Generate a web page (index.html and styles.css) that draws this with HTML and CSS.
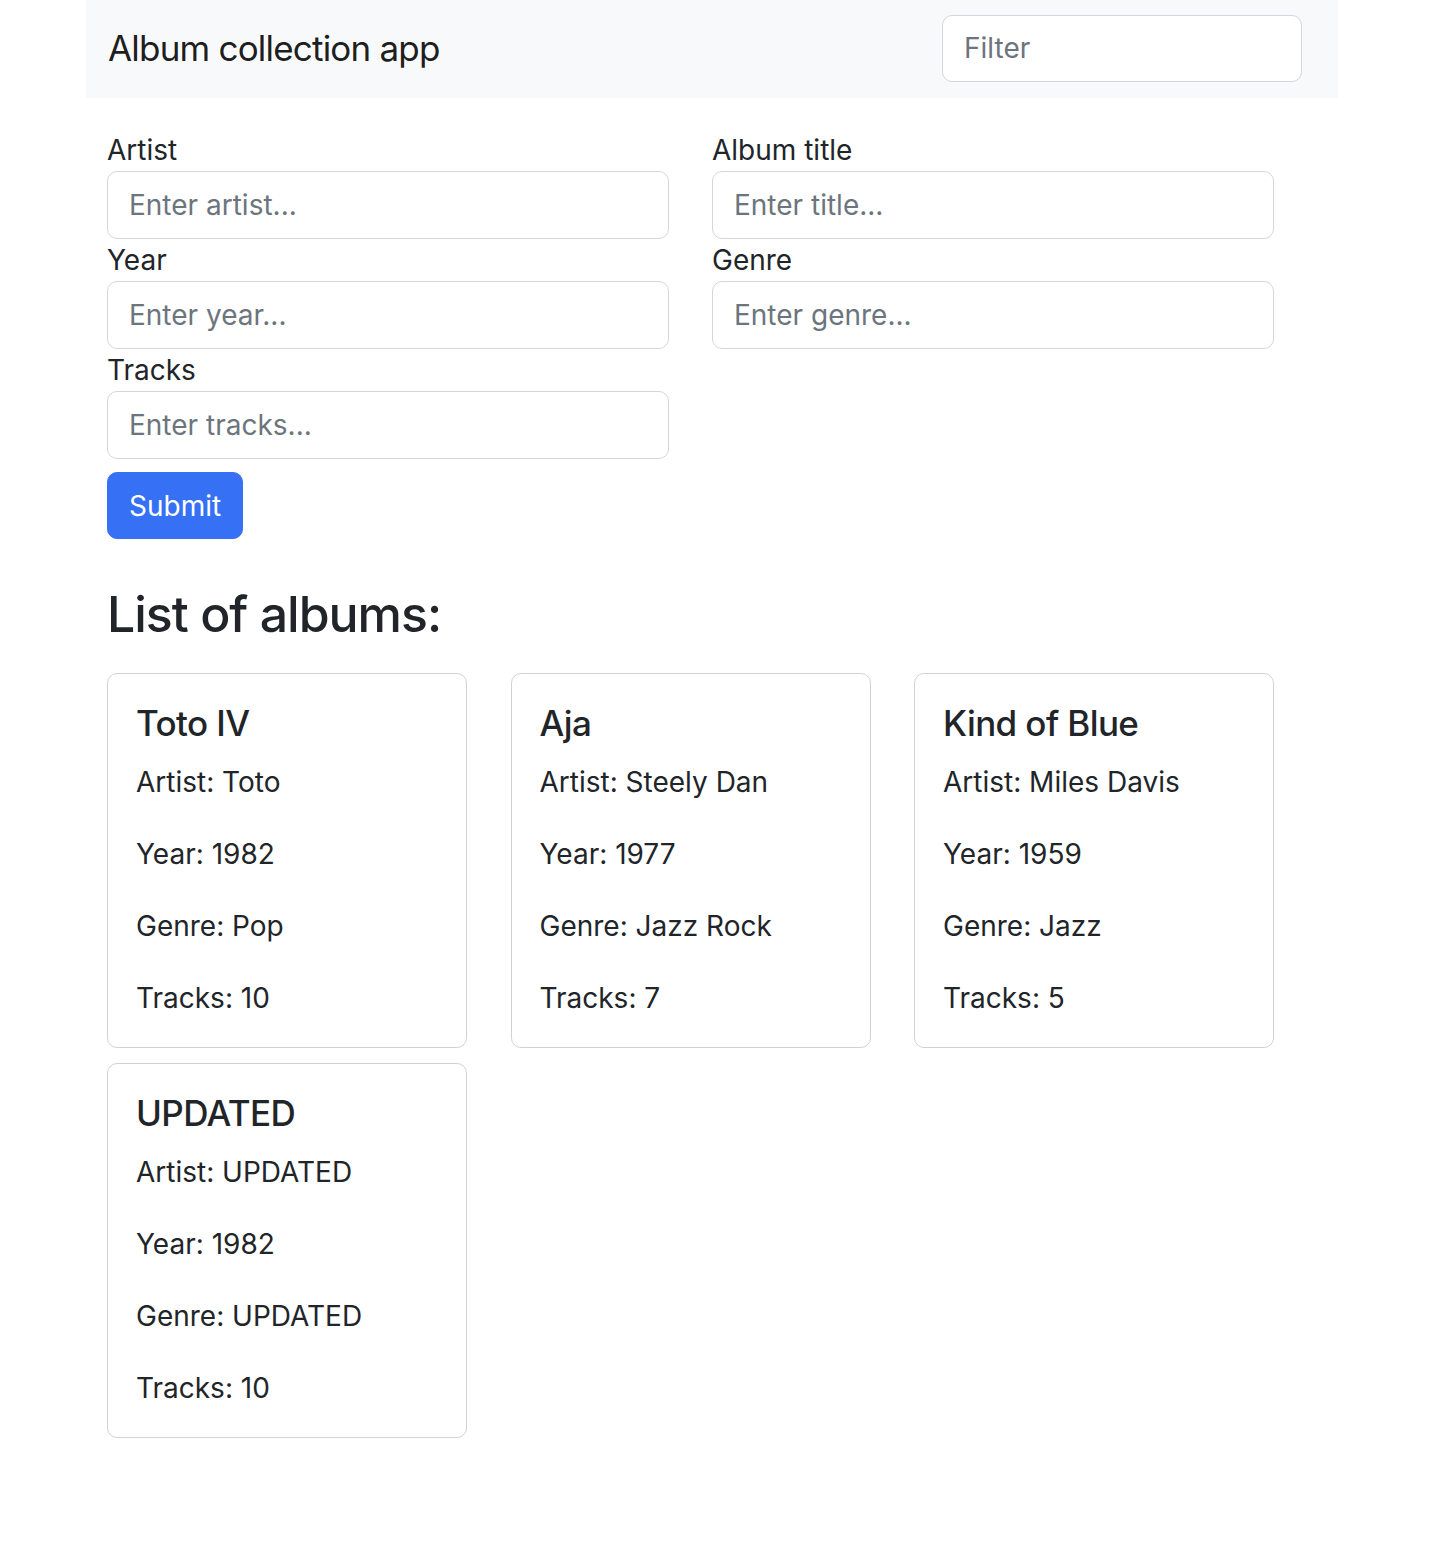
FILE: index.html
```html
<!DOCTYPE html>
<html lang="en">
<head>
<meta charset="utf-8">
<title>Album collection app</title>
<link rel="stylesheet" href="styles.css">
</head>
<body>
<nav class="navbar">
  <span class="brand">Album collection app</span>
  <input class="control filter" type="text" placeholder="Filter">
</nav>
<main class="main">
  <form class="album-form">
    <div class="field">
      <label class="label">Artist</label>
      <input class="control" type="text" placeholder="Enter artist...">
    </div>
    <div class="field">
      <label class="label">Album title</label>
      <input class="control" type="text" placeholder="Enter title...">
    </div>
    <div class="field">
      <label class="label">Year</label>
      <input class="control" type="text" placeholder="Enter year...">
    </div>
    <div class="field">
      <label class="label">Genre</label>
      <input class="control" type="text" placeholder="Enter genre...">
    </div>
    <div class="field">
      <label class="label">Tracks</label>
      <input class="control" type="text" placeholder="Enter tracks...">
    </div>
    <div class="actions">
      <button class="btn" type="button">Submit</button>
    </div>
  </form>
  <h2 class="list-title">List of albums:</h2>
  <div class="cards">
    <div class="card">
      <h5 class="card-title">Toto IV</h5>
      <p class="card-text">Artist: Toto</p>
      <p class="card-text">Year: 1982</p>
      <p class="card-text">Genre: Pop</p>
      <p class="card-text">Tracks: 10</p>
    </div>
    <div class="card">
      <h5 class="card-title">Aja</h5>
      <p class="card-text">Artist: Steely Dan</p>
      <p class="card-text">Year: 1977</p>
      <p class="card-text">Genre: Jazz Rock</p>
      <p class="card-text">Tracks: 7</p>
    </div>
    <div class="card">
      <h5 class="card-title">Kind of Blue</h5>
      <p class="card-text">Artist: Miles Davis</p>
      <p class="card-text">Year: 1959</p>
      <p class="card-text">Genre: Jazz</p>
      <p class="card-text">Tracks: 5</p>
    </div>
    <div class="card">
      <h5 class="card-title">UPDATED</h5>
      <p class="card-text">Artist: UPDATED</p>
      <p class="card-text">Year: 1982</p>
      <p class="card-text">Genre: UPDATED</p>
      <p class="card-text">Tracks: 10</p>
    </div>
  </div>
</main>
</body>
</html>
```
FILE: styles.css
```css
* { box-sizing: border-box; }
html, body {
  margin: 0;
  padding: 0;
  background: #fff;
}
body {
  font-family: Inter, "Noto Sans", "Liberation Sans", sans-serif;
  font-size: 28px;
  line-height: 1.5;
  color: #212529;
}
.navbar {
  margin-left: 86px;
  width: 1252px;
  height: 98px;
  background: #f8f9fa;
  display: flex;
  align-items: center;
  justify-content: space-between;
  padding: 0 36px 0 22px;
}
.brand {
  font-size: 35px;
  line-height: 42px;
  letter-spacing: -0.8px;
  color: rgba(0,0,0,0.9);
  margin-top: -3px;
}
.control {
  display: block;
  width: 562px;
  height: 68px;
  padding: 0 21px;
  font: inherit;
  font-size: 28px;
  color: #212529;
  background: #fff;
  border: 1px solid #d3d6da;
  border-radius: 10px;
  outline: none;
}
.control::placeholder { color: #6c757d; opacity: 1; }
.filter {
  width: 360px;
  height: 67px;
  margin-top: -2px;
}
.main {
  padding: 31px 0 0 107px;
}
.album-form {
  display: grid;
  grid-template-columns: 562px 562px;
  column-gap: 43px;
}
.label {
  display: block;
  line-height: 42px;
}
.actions {
  grid-column: 1 / -1;
  padding-top: 13px;
}
.btn {
  font: inherit;
  font-size: 28px;
  line-height: 42px;
  color: #fff;
  background: #3570f5;
  border: 1px solid #3570f5;
  border-radius: 10px;
  padding: 11.5px 21px;
  height: 67px;
  cursor: pointer;
}
.list-title {
  margin: 45px 0 29px;
  font-size: 50px;
  line-height: 60px;
  font-weight: 500;
  letter-spacing: -1px;
}
.cards {
  display: grid;
  grid-template-columns: repeat(3, 360px);
  column-gap: 43.5px;
  row-gap: 15px;
  padding-bottom: 100px;
}
.card {
  border: 1px solid rgba(0,0,0,0.175);
  border-radius: 10px;
  padding: 28px;
}
.card-title {
  margin: 0 0 17px;
  font-size: 35px;
  line-height: 42px;
  font-weight: 500;
  letter-spacing: -0.6px;
}
.card-text {
  margin: 0 0 30px;
  line-height: 42px;
}
.card-text:last-child { margin-bottom: 0; }
```
